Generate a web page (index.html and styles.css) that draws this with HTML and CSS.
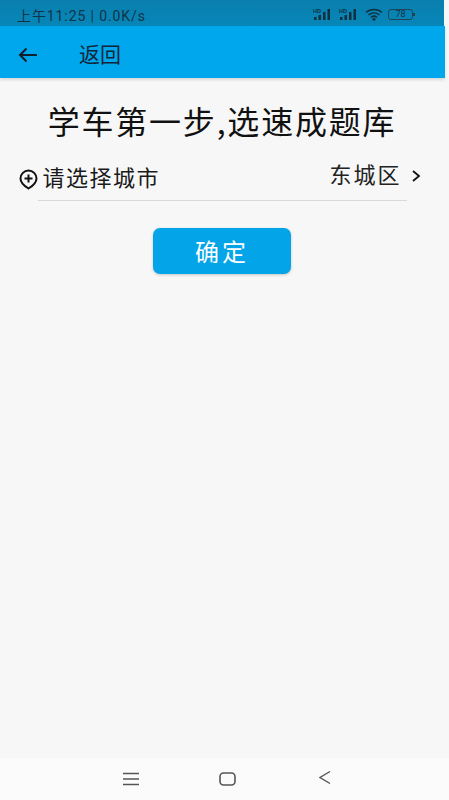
FILE: index.html
```html
<!DOCTYPE html>
<html>
	<head>
		<meta charset="UTF-8">
		<title>返回</title>
		<link rel="stylesheet" href="styles.css">
	</head>
	<body>
		<div class="phone">
			<div class="status">
				<span class="status-text">上午11:25 | 0.0K/s</span>
				<div class="status-icons">
					<svg width="23" height="13" viewBox="0 0 23 13"><text x="0" y="5" class="hd">HD</text><g fill="#10303f"><rect x="1" y="9" width="2.500" height="3"/><rect x="5.500" y="7" width="2.500" height="5"/><rect x="10" y="4" width="2.500" height="8"/><rect x="14.500" y="1" width="2.500" height="11"/></g></svg>
					<svg width="23" height="13" viewBox="0 0 23 13"><text x="0" y="5" class="hd">HD</text><g fill="#10303f"><rect x="1" y="9" width="2.500" height="3"/><rect x="5.500" y="7" width="2.500" height="5"/><rect x="10" y="4" width="2.500" height="8"/><rect x="14.500" y="1" width="2.500" height="11"/></g></svg>
					<svg class="wifi" width="19" height="13" viewBox="0 0 19 13" fill="none" stroke="#10303f" stroke-width="1.500"><path d="M1 4.500C5.500 .5 12.500 .5 17 4.500"/><path d="M3.500 7C6.800 4.200 11.200 4.200 14.500 7"/><path d="M6 9.300C7.800 7.900 10.200 7.900 12 9.300"/><circle cx="9" cy="11.300" r=".8" fill="#10303f"/></svg>
					<div class="battery">78</div>
					<div class="battery-tip"></div>
				</div>
			</div>
			<div class="bar">
				<svg class="back" width="20" height="16" viewBox="0 0 20 16" fill="none" stroke="#10202c" stroke-width="2"><path d="M19 8H2"/><path d="M8.500 1.500L2 8l6.500 6.500"/></svg>
				<span class="bar-title">返回</span>
			</div>
			<div class="content">
				<div class="title">学车第一步,选速成题库</div>
				<div class="row">
					<div class="row-left">
						<svg class="pin" width="19" height="21" viewBox="0 0 19 21" fill="none" stroke="#111" stroke-width="2"><path d="M9.500 19.500C4.500 16.500 1.500 13 1.500 9.500a8 8 0 0 1 16 0c0 3.500-3 7-8 10z"/><path d="M9.500 5.500v8M5.500 9.500h8"/></svg>
						<span>请选择城市</span>
					</div>
					<div class="row-right">
						<span>东城区</span>
						<svg class="arrow" width="10" height="14" viewBox="0 0 10 14" fill="none" stroke="#111" stroke-width="1.800"><path d="M2 2l6 5-6 5"/></svg>
					</div>
				</div>
				<div class="btn">确定</div>
			</div>
			<div class="nav">
				<svg width="18" height="14" viewBox="0 0 18 14" stroke="#555" stroke-width="1.500"><path d="M1 1.500h16M1 7h16M1 12.500h16"/></svg>
				<svg class="home" width="18" height="14" viewBox="0 0 18 14" fill="none" stroke="#555" stroke-width="1.600"><rect x="1" y="1" width="15" height="12" rx="3.500"/></svg>
				<svg class="recent" width="12" height="16" viewBox="0 0 12 16" fill="none" stroke="#555" stroke-width="1.400"><path d="M11 1.500L1 7.500l10 6"/></svg>
			</div>
		</div>
	</body>
</html>
```
FILE: styles.css
```css
*{
	box-sizing: border-box;
	margin: 0;
	padding: 0;
}
body{
	width: 449px;
	height: 800px;
	overflow: hidden;
	background: #f7f7f7;
	font-family: "Noto Sans CJK SC", "Noto Sans", sans-serif;
	color: #1a1a1a;
}
.phone{
	width: 449px;
	height: 800px;
	display: flex;
	flex-direction: column;
}
.status{
	height: 26px;
	width: 444px;
	flex-shrink: 0;
	background: linear-gradient(#0a7fae, #0686b8);
	display: flex;
	align-items: center;
	justify-content: space-between;
	padding: 3px 29px 0 17px;
}
.status-text{
	font-family: "Roboto", "Noto Sans CJK SC", sans-serif;
	font-size: 14px;
	letter-spacing: .9px;
	color: #123346;
}
.status-icons{
	display: flex;
	align-items: center;
	gap: 4px;
}
.hd{
	font-family: "Liberation Sans", sans-serif;
	font-size: 5.500px;
	font-weight: bold;
	fill: #10303f;
}
.status-icons svg{
	margin-left: -1px;
}
.battery{
	width: 25px;
	height: 11px;
	border: 1px solid #1c4658;
	border-radius: 3px;
	font-family: "Roboto", sans-serif;
	font-size: 9px;
	line-height: 9px;
	text-align: center;
	color: #123346;
}
.battery-tip{
	width: 2px;
	height: 3px;
	margin-left: -4px;
	background: #1c4658;
}
.bar{
	height: 52px;
	width: 445px;
	flex-shrink: 0;
	background: #00a7ec;
	display: flex;
	align-items: center;
	padding: 2px 0 0 18px;
	box-shadow: 0 2px 3px rgba(0, 0, 0, .12);
}
.back{
	margin-top: 4px;
}
.bar-title{
	margin-left: 41px;
	font-size: 21px;
	color: #12263a;
}
.content{
	flex: 1;
	width: 444px;
	padding: 21px 0 0;
	display: flex;
	flex-direction: column;
	align-items: center;
}
.title{
	font-size: 32px;
	line-height: 42px;
	letter-spacing: 1.800px;
	color: #111;
	white-space: nowrap;
}
.row{
	width: 369px;
	height: 50px;
	margin-top: 10px;
	padding-bottom: 5px;
	border-bottom: 1px solid #d9d9d9;
	display: flex;
	align-items: center;
	justify-content: space-between;
	font-size: 22px;
}
.row-left{
	display: flex;
	align-items: center;
	gap: 5px;
	margin-left: -19px;
	padding-top: 5px;
}
.row-left span{
	letter-spacing: 1.500px;
}
.pin{
	margin-top: 8px;
}
.row-right{
	display: flex;
	align-items: center;
	gap: 9px;
	margin-right: -14px;
	color: #222;
}
.row-right span{
	letter-spacing: 2px;
}
.arrow{
	margin-top: 5px;
}
.btn{
	width: 138px;
	height: 46px;
	margin-top: 27px;
	background: #04a5e8;
	border-radius: 7px;
	box-shadow: 0 1px 3px rgba(0, 0, 0, .2);
	color: #fff;
	font-size: 24px;
	line-height: 46px;
	text-align: center;
	letter-spacing: 3px;
}
.nav{
	height: 42px;
	flex-shrink: 0;
	background: #fbfbfb;
	display: flex;
	align-items: center;
	justify-content: center;
	gap: 79px;
	padding-left: 4px;
}
.recent{
	margin-left: 3px;
	margin-top: -3px;
}
```
